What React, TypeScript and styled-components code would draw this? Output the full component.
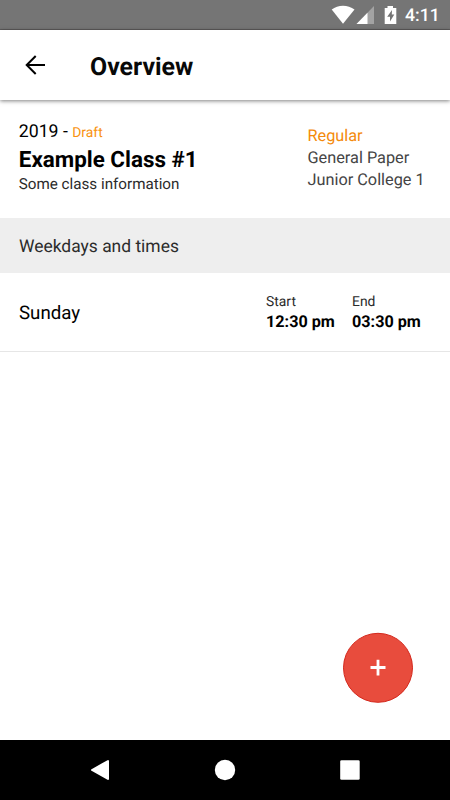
import React from "react";
import styled, { createGlobalStyle } from "styled-components";

const GlobalStyle = createGlobalStyle`
  * { box-sizing: border-box; }
  body {
    margin: 0;
    background: #fff;
    font-family: Roboto, "Liberation Sans", sans-serif;
    color: #000;
    text-rendering: geometricPrecision;
  }
`;

const Screen = styled.div`
  display: flex;
  flex-direction: column;
  position: relative;
  width: 450px;
  height: 800px;
  overflow: hidden;
  background: #fff;
`;

const StatusBar = styled.div`
  display: flex;
  flex: none;
  height: 30px;
  background: #757575;
  border-bottom: 1px solid #5f5d5d;
  justify-content: flex-end;
  padding-right: 11px;
`;

const StatusIcons = styled.svg`
  display: block;
  width: 76px;
  height: 29px;
`;

const Clock = styled.time`
  width: 34px;
  font-size: 17.7px;
  font-weight: 500;
  line-height: 33px;
  color: #fff;
  white-space: nowrap;
`;

const AppBar = styled.header`
  display: flex;
  flex: none;
  align-items: center;
  height: 70px;
  padding-left: 22px;
  background: #fff;
  box-shadow: 0 1px 4px rgba(0, 0, 0, 0.5);
  z-index: 1;
`;

const BackButton = styled.button`
  display: flex;
  width: 26px;
  height: 26px;
  margin-right: 42px;
  padding: 0;
  border: 0;
  background: none;
`;

const Title = styled.h1`
  margin: 5px 0 0;
  font-size: 24.9px;
  line-height: 30px;
  font-weight: 700;
  color: #080808;
`;

const Line = styled.div<{
  $size: number;
  $height: number;
  $weight?: number;
  $color?: string;
}>`
  font-size: ${(p) => p.$size}px;
  line-height: ${(p) => p.$height}px;
  font-weight: ${(p) => p.$weight ?? 400};
  color: ${(p) => p.$color ?? "#000"};
  white-space: nowrap;
`;

const Draft = styled.span`
  font-size: 13.9px;
  color: #f99210;
`;

const Summary = styled.section`
  display: flex;
  flex: none;
  justify-content: space-between;
  height: 118px;
  padding: 20px 0 0 18.8px;
`;

const Category = styled.div`
  width: 142.5px;
  padding-top: 5px;
`;

const SectionHeading = styled.div`
  display: flex;
  flex: none;
  align-items: center;
  height: 55px;
  padding: 2px 0 0 19px;
  background: #eee;
`;

const DayRow = styled.div`
  display: flex;
  flex: none;
  height: 79px;
  padding-left: 19px;
  border-bottom: 1px solid #e6e6e6;
`;

const DayName = styled.div`
  display: flex;
  align-items: center;
  width: 247px;
  padding-top: 2px;
`;

const TimeSlot = styled.div`
  width: 86px;
  padding-top: 19px;
`;

const AddButton = styled.button`
  display: flex;
  position: absolute;
  left: 342.5px;
  top: 632.5px;
  width: 70px;
  height: 70px;
  padding: 0;
  align-items: center;
  justify-content: center;
  border: 0;
  background: none;
`;

const NavBar = styled.nav`
  display: flex;
  flex: none;
  height: 60px;
  margin-top: auto;
  padding: 0 36px;
  justify-content: space-between;
  align-items: center;
  background: #000;
`;

const NavIcon = styled.svg`
  display: block;
  width: 126px;
  height: 60px;
`;

const AddIcon = styled.svg`
  display: block;
  flex: none;
  width: 72px;
  height: 72px;
`;

export default function App() {
  return (
    <Screen>
      <GlobalStyle />
      <StatusBar>
        <StatusIcons viewBox="329 0 76 29">
          <path d="M331.7 9.5C338 4.4 348 4.4 354.5 9.5L343 23.8Z" fill="#fff" />
          <path d="M374 6V24H356.5Z" fill="#a3a3a3" />
          <path d="M367.5 12.7V24H356.5Z" fill="#fff" />
          <path d="M387.5 6H393V8H396.3V24H384.7V8H387.5Z" fill="#fff" />
          <path d="M392 10L387.2 16.8H390V21.5L394.3 14.5H391.8Z" fill="#757575" />
        </StatusIcons>
        <Clock>4:11</Clock>
      </StatusBar>
      <AppBar>
        <BackButton aria-label="Back">
          <svg width="26" height="26" viewBox="0 0 26 26" fill="none" stroke="#000" strokeWidth="2">
            <path d="M23 13H5M13.7 4L4.7 13L13.7 22" />
          </svg>
        </BackButton>
        <Title>Overview</Title>
      </AppBar>
      <Summary>
        <div>
          <Line $size={17.7} $height={25}>2019 - <Draft>Draft</Draft></Line>
          <Line $size={22.4} $height={28} $weight={700}>Example Class #1</Line>
          <Line $size={15.2} $height={20} $color="#2b2b2b">Some class information</Line>
        </div>
        <Category>
          <Line $size={16.3} $height={22} $color="#f48a0b">Regular</Line>
          <Line $size={16.3} $height={22} $color="#444">General Paper</Line>
          <Line $size={16.3} $height={22} $color="#444">Junior College 1</Line>
        </Category>
      </Summary>
      <SectionHeading>
        <Line $size={17.45} $height={22} $color="#2b2b2b">Weekdays and times</Line>
      </SectionHeading>
      <DayRow>
        <DayName><Line $size={18.7} $height={24}>Sunday</Line></DayName>
        <TimeSlot>
          <Line $size={13.9} $height={20} $color="#2b2b2b">Start</Line>
          <Line $size={16.2} $height={20} $weight={700}>12:30 pm</Line>
        </TimeSlot>
        <TimeSlot>
          <Line $size={13.9} $height={20} $color="#2b2b2b">End</Line>
          <Line $size={16.2} $height={20} $weight={700}>03:30 pm</Line>
        </TimeSlot>
      </DayRow>
      <AddButton aria-label="Add">
        <AddIcon viewBox="341.5 631.5 72 72" fill="none">
          <circle cx="377.5" cy="667.3" r="34.5" fill="#e84c3d" stroke="#d4281c" />
          <path d="M370 667H385M377.5 659.2V675" stroke="#fff" strokeWidth="2.8" />
        </AddIcon>
      </AddButton>
      <NavBar>
        <NavIcon viewBox="36 740 126 60">
          <path d="M92 770L108 761V779Z" fill="#fff" stroke="#fff" strokeWidth="2" strokeLinejoin="round" />
        </NavIcon>
        <NavIcon viewBox="162 740 126 60">
          <circle cx="225" cy="770" r="10.2" fill="#fff" />
        </NavIcon>
        <NavIcon viewBox="288 740 126 60">
          <rect x="340.2" y="760.2" width="19.5" height="19.5" rx="1.3" fill="#fff" />
        </NavIcon>
      </NavBar>
    </Screen>
  );
}
